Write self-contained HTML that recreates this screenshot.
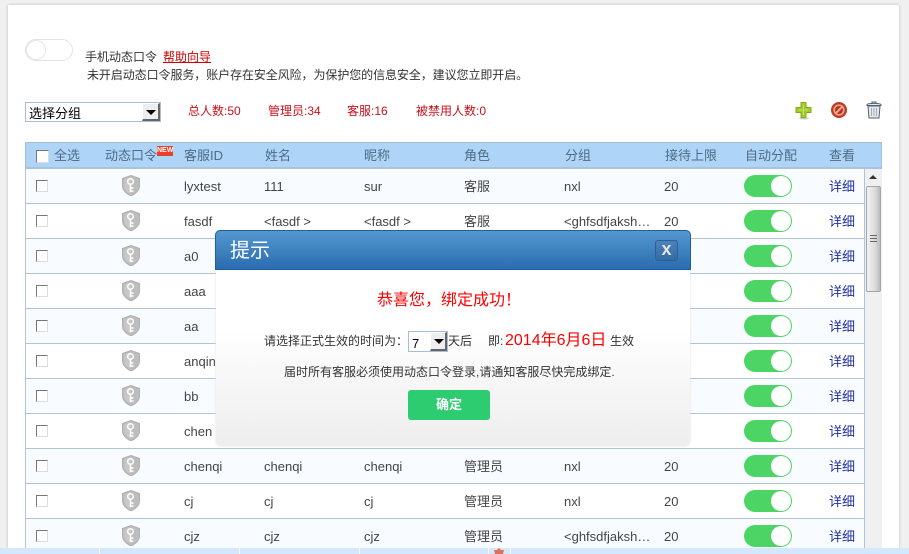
<!DOCTYPE html>
<html><head><meta charset="utf-8">
<style>
*{box-sizing:border-box}
html,body{margin:0;padding:0}
body{width:909px;height:554px;overflow:hidden;position:relative;background:#f0f0f0;font:13px "Liberation Sans","WenQuanYi Zen Hei","Noto Sans CJK SC",sans-serif;color:#444}
.a{position:absolute;white-space:nowrap}
#panel{left:8px;top:5px;width:891px;height:543px;background:#fff;box-shadow:0 0 3px #bbb}
#foot{left:0;top:548px;width:909px;height:6px;background:#d3e8fd}
#foot b{position:absolute;top:0;width:1px;height:6px;background:#f4f9ff}
.red{color:#c8101a}
#sel{left:25px;top:102px;width:136px;height:20px;border:1px solid #a5bdd6;background:#fff;color:#000;line-height:22px;padding-left:3px}
#sel i{position:absolute;right:0;top:0;width:18px;height:18px;background:#eee;border:1px solid;border-color:#fff #666 #666 #fff;border-width:1px 2px 2px 1px}
#sel i:after,#dsel i:after{content:"";position:absolute;left:3px;top:6px;border:5px solid transparent;border-top:5px solid #000;border-bottom:0}
#head{left:25px;top:142px;width:857px;height:27px;background:#aed5f7;border-top:1px solid #a2c0da;border-bottom:2px solid #a9c3da;border-left:1px solid #a2c0da;border-right:1px solid #a2c0da}
.h{top:148px;color:#4f6b85;line-height:15px}
#body{left:25px;top:169px;width:840px;height:379px;border-left:1px solid #b0c4d6;border-right:1px solid #b0c4d6;overflow:hidden}
.r{position:absolute;left:0;width:838px;height:35px;border-bottom:1px solid #b0c4d6;background:#fff}
.o{background:#f8fbff}
.c{position:absolute;top:10px;line-height:15px;white-space:nowrap}
.cb{position:absolute;left:10px;top:11px;width:12px;height:12px;border:1px solid;border-color:#777 #ddd #ddd #777;background:#fff}
.t{position:absolute;left:718px;top:6px;width:48px;height:22px;border-radius:11px;background:#4cd564}
.t:after{content:"";position:absolute;right:1px;top:1px;width:20px;height:20px;border-radius:50%;background:#fff}
.l{position:absolute;left:803px;top:10px;line-height:15px;color:#1f2f9f}
.k{position:absolute;left:96px;top:6px}
#sb{left:865px;top:169px;width:17px;height:379px;background:#f0f0f0}
#th{position:absolute;left:1px;top:17px;width:15px;height:106px;background:linear-gradient(90deg,#f2f2f2,#dcdcdc 60%,#bbb);border:1px solid #a5a5a5;border-radius:2px}
#dlg{left:215px;top:230px;width:476px;height:40px;border:1px solid #1b5fa5;border-radius:5px 5px 0 0;background:linear-gradient(#5498ce,#2a6cb0)}
#dbody{left:216px;top:270px;width:474px;height:176px;background:linear-gradient(#fff 35%,#f6f6f6 65%,#eee);border-radius:0 0 5px 5px;box-shadow:0 0 2px #ddd}
#x{left:655px;top:240px;width:23px;height:21px;background:linear-gradient(#4d82b8,#346ba3);border:1px solid #2a5f98;border-radius:3px;color:#e4e4e4;font:bold 18px/16px "Liberation Sans",sans-serif;text-align:center}
#dsel{left:408px;top:331px;width:40px;height:21px;border:1px solid #a5bdd6;background:#fff;color:#000;line-height:23px;padding-left:3px}
#dsel i{position:absolute;right:0;top:0;width:17px;height:19px;background:#eee;border:1px solid;border-color:#fff #666 #666 #fff;border-width:1px 2px 2px 1px}
#ok{left:408px;top:390px;width:82px;height:30px;background:#2ecc71;border-radius:3px;color:#fff;font-weight:bold;text-align:center;line-height:30px;font-size:13px}
</style></head><body>
<svg width="0" height="0" style="position:absolute"><defs><symbol id="key" viewBox="0 0 18 21"><path d="M9 0.500L0.500 3.500v7.500c0 5 4.500 8 8.500 10 4-2 8.500-5 8.500-10V3.500z" fill="#bdbdbd" stroke="#b0b0b0"/><path d="M9 2L2.500 4.500v6.500c0 4 3.500 6.500 6.500 8z" fill="#c8c8c8"/><circle cx="8.500" cy="6.500" r="2.800" fill="none" stroke="#fff" stroke-width="1.500"/><path d="M8.500 9v8M8.500 13h3M8.500 16h3" stroke="#fff" stroke-width="1.500" fill="none"/></symbol></defs></svg>
<div class="a" id="panel"></div>
<div class="a" id="foot"><b style="left:99px"></b><b style="left:239px"></b><b style="left:359px"></b><b style="left:488px"></b><b style="left:510px"></b><svg style="position:absolute;left:493px;top:0" width="12" height="6"><path d="M6 0l2 2h3l-1 4H2L1 2h3z" fill="#e0705a"/></svg></div>

<div class="a" style="left:25px;top:39px;width:48px;height:22px;border:1px solid #e3e3e3;border-radius:11px;background:#fff"><div style="position:absolute;left:0;top:0;width:20px;height:20px;border-radius:50%;border:1px solid #e5e5e5;background:#fff"></div></div>
<div class="a" style="left:85px;top:50px;color:#333;font-size:12px;line-height:15px">手机动态口令</div>
<div class="a" style="left:163px;top:50px;color:#c00;font-size:12px;line-height:15px;text-decoration:underline">帮助向导</div>
<div class="a" style="left:87px;top:68px;color:#333;font-size:12px;line-height:15px;letter-spacing:-.08px">未开启动态口令服务，账户存在安全风险，为保护您的信息安全，建议您立即开启。</div>

<div class="a" id="sel">选择分组<i></i></div>
<div class="a red" style="left:188px;top:104px;font-size:12px;line-height:15px">总人数:50</div>
<div class="a red" style="left:268px;top:104px;font-size:12px;line-height:15px">管理员:34</div>
<div class="a red" style="left:347px;top:104px;font-size:12px;line-height:15px">客服:16</div>
<div class="a red" style="left:416px;top:104px;font-size:12px;line-height:15px">被禁用人数:0</div>

<svg class="a" style="left:795px;top:101px" width="18" height="19" viewBox="0 0 18 19"><ellipse cx="9" cy="17.500" rx="5" ry="1" fill="#ccc"/><path d="M6 1.500h5v5h5v5h-5v5H6v-5H1v-5h5z" fill="#a3cc2a" stroke="#86a820"/><path d="M8.500 4v10M4 9h9" stroke="#c5e06a" stroke-width="1"/></svg>
<svg class="a" style="left:830px;top:101px" width="18" height="18" viewBox="0 0 18 18"><circle cx="9" cy="9" r="8" fill="#c23a22"/><circle cx="9" cy="9" r="4.800" fill="#b8301e" stroke="#eaa792" stroke-width="1.600"/><path d="M5.500 12.500L12.500 5.500" stroke="#eaa792" stroke-width="2"/></svg>
<svg class="a" style="left:866px;top:101px" width="16" height="18" viewBox="0 0 16 18"><path d="M1 3.500c1-1.500 13-1.500 14 0v1H1z" fill="#e8ebef" stroke="#566274"/><path d="M6 2V1h4v1" stroke="#566274" fill="none"/><path d="M2 5l1 12h10l1-12z" fill="#e4e7eb" stroke="#566274"/><path d="M5.500 7v8M8 7v8M10.500 7v8" stroke="#a3abb5"/></svg>

<div class="a" id="head"></div>
<div class="a" style="left:36px;top:150px;width:13px;height:13px;border:1px solid;border-color:#777 #ddd #ddd #777;background:#fff"></div>
<div class="a h" style="left:54px">全选</div>
<div class="a h" style="left:105px">动态口令</div>
<div class="a" style="left:157px;top:146px;width:16px;height:10px;background:#e8402a;color:#fff;font:bold 7px/10px 'Liberation Sans',sans-serif;text-align:center">NEW</div>
<div class="a h" style="left:184px">客服ID</div>
<div class="a h" style="left:265px">姓名</div>
<div class="a h" style="left:364px">昵称</div>
<div class="a h" style="left:464px">角色</div>
<div class="a h" style="left:565px">分组</div>
<div class="a h" style="left:665px">接待上限</div>
<div class="a h" style="left:745px">自动分配</div>
<div class="a h" style="left:829px">查看</div>

<div class="a" id="body">
<div class="r o" style="top:0"><span class="cb"></span><svg class="k" width="18" height="21"><use href="#key"/></svg><span class="c" style="left:158px">lyxtest</span><span class="c" style="left:238px">111</span><span class="c" style="left:338px">sur</span><span class="c" style="left:438px">客服</span><span class="c" style="left:538px">nxl</span><span class="c" style="left:638px">20</span><span class="t"></span><span class="l">详细</span></div>
<div class="r" style="top:35px"><span class="cb"></span><svg class="k" width="18" height="21"><use href="#key"/></svg><span class="c" style="left:158px">fasdf</span><span class="c" style="left:238px">&lt;fasdf &gt;</span><span class="c" style="left:338px">&lt;fasdf &gt;</span><span class="c" style="left:438px">客服</span><span class="c" style="left:538px">&lt;ghfsdfjaksh…</span><span class="c" style="left:638px">20</span><span class="t"></span><span class="l">详细</span></div>
<div class="r o" style="top:70px"><span class="cb"></span><svg class="k" width="18" height="21"><use href="#key"/></svg><span class="c" style="left:158px">a0</span><span class="t"></span><span class="l">详细</span></div>
<div class="r" style="top:105px"><span class="cb"></span><svg class="k" width="18" height="21"><use href="#key"/></svg><span class="c" style="left:158px">aaa</span><span class="t"></span><span class="l">详细</span></div>
<div class="r o" style="top:140px"><span class="cb"></span><svg class="k" width="18" height="21"><use href="#key"/></svg><span class="c" style="left:158px">aa</span><span class="t"></span><span class="l">详细</span></div>
<div class="r" style="top:175px"><span class="cb"></span><svg class="k" width="18" height="21"><use href="#key"/></svg><span class="c" style="left:158px">anqin</span><span class="t"></span><span class="l">详细</span></div>
<div class="r o" style="top:210px"><span class="cb"></span><svg class="k" width="18" height="21"><use href="#key"/></svg><span class="c" style="left:158px">bb</span><span class="t"></span><span class="l">详细</span></div>
<div class="r" style="top:245px"><span class="cb"></span><svg class="k" width="18" height="21"><use href="#key"/></svg><span class="c" style="left:158px">chen</span><span class="t"></span><span class="l">详细</span></div>
<div class="r o" style="top:280px"><span class="cb"></span><svg class="k" width="18" height="21"><use href="#key"/></svg><span class="c" style="left:158px">chenqi</span><span class="c" style="left:238px">chenqi</span><span class="c" style="left:338px">chenqi</span><span class="c" style="left:438px">管理员</span><span class="c" style="left:538px">nxl</span><span class="c" style="left:638px">20</span><span class="t"></span><span class="l">详细</span></div>
<div class="r" style="top:315px"><span class="cb"></span><svg class="k" width="18" height="21"><use href="#key"/></svg><span class="c" style="left:158px">cj</span><span class="c" style="left:238px">cj</span><span class="c" style="left:338px">cj</span><span class="c" style="left:438px">管理员</span><span class="c" style="left:538px">nxl</span><span class="c" style="left:638px">20</span><span class="t"></span><span class="l">详细</span></div>
<div class="r o" style="top:350px"><span class="cb"></span><svg class="k" width="18" height="21"><use href="#key"/></svg><span class="c" style="left:158px">cjz</span><span class="c" style="left:238px">cjz</span><span class="c" style="left:338px">cjz</span><span class="c" style="left:438px">管理员</span><span class="c" style="left:538px">&lt;ghfsdfjaksh…</span><span class="c" style="left:638px">20</span><span class="t"></span><span class="l">详细</span></div>
</div>
<div class="a" id="sb"><div style="position:absolute;left:4px;top:6px;border:4px solid transparent;border-bottom:4px solid #333;border-top:0"></div><div id="th"><div style="position:absolute;left:3px;top:48px;width:7px;height:7px;border-top:1px solid #666;border-bottom:1px solid #666"><div style="height:1px;margin-top:2px;background:#666"></div></div></div></div>

<div class="a" id="dbody"></div>
<div class="a" id="dlg"></div>
<div class="a" style="left:230px;top:239px;color:#fff;font-size:20px;line-height:24px">提示</div>
<div class="a" id="x">x</div>
<div class="a" style="left:377px;top:291px;color:#f00;font-size:16px;line-height:20px">恭喜您，绑定成功！</div>
<div class="a" style="left:264px;top:334px;color:#333;font-size:12px;line-height:15px">请选择正式生效的时间为：</div>
<div class="a" id="dsel">7<i></i></div>
<div class="a" style="left:448px;top:334px;color:#333;font-size:12px;line-height:15px">天后</div>
<div class="a" style="left:488px;top:334px;color:#333;font-size:12px;line-height:15px">即:</div>
<div class="a" style="left:505px;top:331px;color:#f00;font-size:16px;line-height:20px">2014年6月6日</div>
<div class="a" style="left:610px;top:334px;color:#333;font-size:12px;line-height:15px">生效</div>
<div class="a" style="left:284px;top:365px;color:#333;font-size:12px;line-height:15px">届时所有客服必须使用动态口令登录,请通知客服尽快完成绑定.</div>
<div class="a" id="ok">确定</div>
</body></html>
